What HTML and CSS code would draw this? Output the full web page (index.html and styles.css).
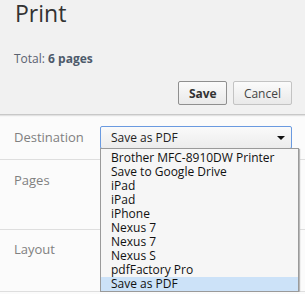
FILE: index.html
```html
<!DOCTYPE html>
<html lang="en">
<head>
    <meta charset="UTF-8">
    <meta name="viewport" content="width=device-width, initial-scale=1.0">
    <title>Print</title>
    <link rel="stylesheet" href="styles.css">
</head>
<body>
    <div class="header">
        <h1>Print</h1>
        <p class="summary">Total: <strong>6 pages</strong></p>
        <div class="buttons">
            <button class="default">Save</button>
            <button>Cancel</button>
        </div>
    </div>

    <div class="settings">
        <div class="row destination">
            <span class="label">Destination</span>
            <div class="picker">
                <div class="select">Save as PDF<span class="arrow"></span></div>
                <ul class="menu">
                    <li>Brother MFC-8910DW Printer</li>
                    <li>Save to Google Drive</li>
                    <li>iPad</li>
                    <li>iPad</li>
                    <li>iPhone</li>
                    <li>Nexus 7</li>
                    <li>Nexus 7</li>
                    <li>Nexus S</li>
                    <li>pdfFactory Pro</li>
                    <li class="selected">Save as PDF</li>
                </ul>
            </div>
        </div>
        <div class="row pages">
            <span class="label">Pages</span>
        </div>
        <div class="row layout">
            <span class="label">Layout</span>
        </div>
    </div>
</body>
</html>
```

FILE: styles.css
```css
body {
    margin: 0;
    font-family: "Open Sans", "DejaVu Sans", sans-serif;
    background-color: #fbfbfb;
    overflow: hidden;
}

.header {
    background-color: #f1f1f1;
    height: 114px;
    padding: 0 13px 0 14px;
    border-bottom: 1px solid #c8c8c8;
    box-shadow: 0 1px 1px #e2e2e2;
}

h1 {
    margin: 0;
    padding-left: 1px;
    font-size: 23px;
    font-weight: normal;
    line-height: 26px;
    color: #333;
}

.summary {
    margin: 25px 0 0;
    font-size: 12px;
    line-height: 16px;
    color: #5a6270;
}

.summary strong {
    color: #4d5a6b;
}

.buttons {
    display: flex;
    justify-content: flex-end;
    gap: 6px;
    margin-top: 14px;
}

button {
    height: 24px;
    padding: 0 10px;
    font-family: inherit;
    font-size: 12px;
    color: #444;
    background: linear-gradient(#fbfbfb, #e9e9e9);
    border: 1px solid #c3c3c3;
    border-radius: 2px;
}

button.default {
    width: 49px;
    font-weight: bold;
    color: #333;
    border-color: #8f8f8f;
}

.row {
    display: flex;
    border-bottom: 1px solid #dedede;
    padding-left: 14px;
}

.label {
    width: 86px;
    font-size: 13px;
    color: #808080;
}

.destination {
    height: 44px;
    align-items: center;
}

.pages {
    height: 70px;
    padding-top: 11px;
    box-sizing: border-box;
}

.layout {
    height: 62px;
    padding-top: 10px;
    box-sizing: border-box;
}

.picker {
    position: relative;
}

.select {
    width: 180px;
    height: 21px;
    padding-left: 10px;
    font-size: 12px;
    line-height: 21px;
    color: #222;
    background: linear-gradient(#fafafa, #ececec);
    border: 1px solid #6a9ae0;
    border-radius: 2px;
    position: relative;
}

.arrow {
    position: absolute;
    right: 6px;
    top: 9px;
    border-left: 4px solid transparent;
    border-right: 4px solid transparent;
    border-top: 4px solid #111;
}

.menu {
    position: absolute;
    left: 0;
    top: 22px;
    width: 197px;
    margin: 0;
    padding: 2px 0 0;
    list-style: none;
    background-color: #f6f6f6;
    border: 1px solid #9a9a9a;
    box-shadow: 1px 1px 1px #b8b8b8;
    z-index: 2;
}

.menu li {
    height: 14px;
    padding-left: 10px;
    font-size: 12px;
    line-height: 14px;
    color: #111;
}

.menu li.selected {
    background-color: #cce2f8;
}
```
